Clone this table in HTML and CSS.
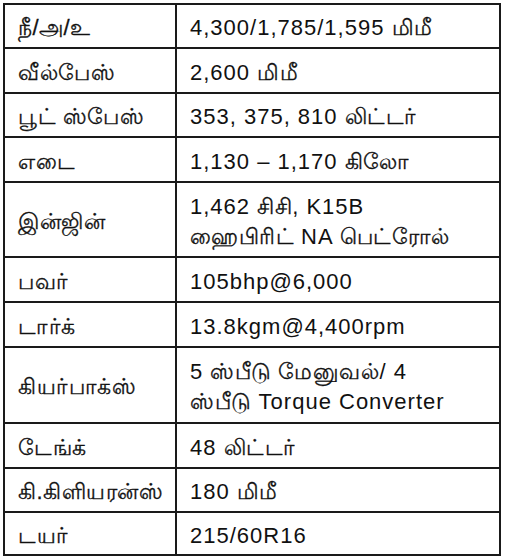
FILE: index.html
```html
<!DOCTYPE html>
<html lang="ta">
<head>
<meta charset="utf-8">
<title>Specs</title>
<link rel="stylesheet" href="styles.css">
</head>
<body>
<table class="spec">
  <tbody>
    <tr class="h44"><td class="k">நீ/அ/உ</td><td class="v">4,300/1,785/1,595 <span class="ta">மிமீ</span></td></tr>
    <tr class="h45"><td class="k">வீல்பேஸ்</td><td class="v">2,600 <span class="ta">மிமீ</span></td></tr>
    <tr class="h44"><td class="k">பூட் ஸ்பேஸ்</td><td class="v">353, 375, 810 <span class="ta">லிட்டர்</span></td></tr>
    <tr class="h45"><td class="k">எடை</td><td class="v">1,130 – 1,170 <span class="ta">கிலோ</span></td></tr>
    <tr class="h75"><td class="k">இன்ஜின்</td><td class="v">1,462 <span class="ta">சிசி</span>, K15B<br><span class="ta">ஹைபிரிட்</span> NA <span class="ta">பெட்ரோல்</span></td></tr>
    <tr class="h45"><td class="k">பவர்</td><td class="v">105bhp@6,000</td></tr>
    <tr class="h45"><td class="k">டார்க்</td><td class="v">13.8kgm@4,400rpm</td></tr>
    <tr class="h76"><td class="k">கியர்பாக்ஸ்</td><td class="v">5 <span class="ta">ஸ்பீடு மேனுவல்</span>/ 4<br><span class="ta">ஸ்பீடு</span> Torque Converter</td></tr>
    <tr class="h45"><td class="k">டேங்க்</td><td class="v">48 <span class="ta">லிட்டர்</span></td></tr>
    <tr class="h44"><td class="k">கி.கிளியரன்ஸ்</td><td class="v">180 <span class="ta">மிமீ</span></td></tr>
    <tr class="h43"><td class="k">டயர்</td><td class="v">215/60R16</td></tr>
  </tbody>
</table>
</body>
</html>
```
FILE: styles.css
```css
html, body {
  margin: 0;
  padding: 0;
  background: #ffffff;
}
body {
  font-family: "Liberation Sans", Arial, sans-serif;
  font-size: 22px;
  letter-spacing: 1px;
  color: #111111;
}
.spec {
  margin: 3px 0 0 3px;
  width: 498px;
  border-collapse: collapse;
  table-layout: fixed;
}
.spec td {
  box-sizing: border-box;
  border: 2px solid #1a1a1a;
  padding: 4px 8px 0 13px;
  line-height: 30px;
  vertical-align: middle;
  white-space: nowrap;
}
.spec td.k {
  width: 172px;
  font-size: 22px;
  letter-spacing: 0.5px;
  -webkit-text-stroke: 0.3px #111111;
}
.spec .ta {
  font-size: 22px;
  letter-spacing: 0.5px;
  -webkit-text-stroke: 0.3px #111111;
}
.spec tr.h43 td { height: 43px; }
.spec tr.h44 td { height: 44px; }
.spec tr.h45 td { height: 45px; }
.spec tr.h75 td { height: 75px; }
.spec tr.h76 td { height: 76px; }
```
